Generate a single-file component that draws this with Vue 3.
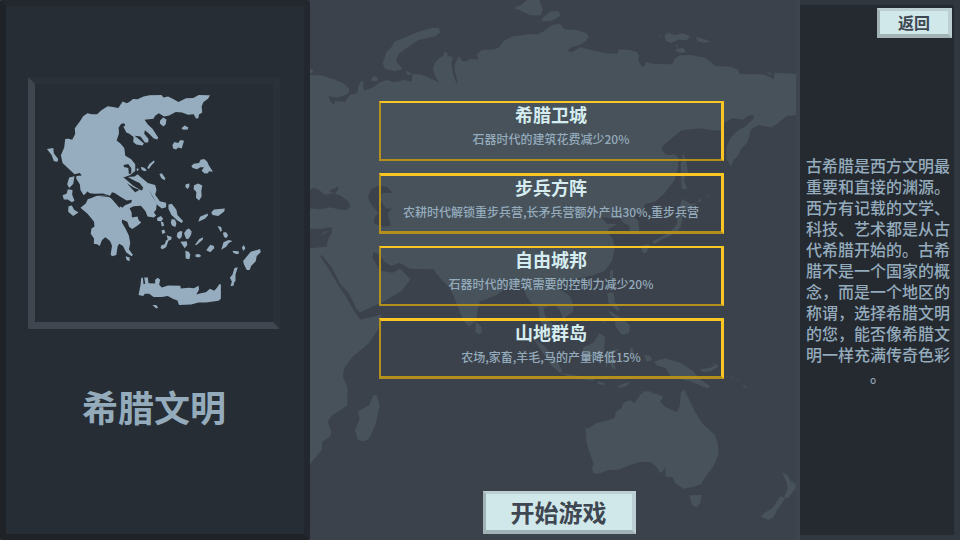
<script setup>
import { ref } from 'vue'

const civName = ref('希腊文明')
const intro = ref('古希腊是西方文明最重要和直接的渊源。西方有记载的文学、科技、艺术都是从古代希腊开始的。古希腊不是一个国家的概念，而是一个地区的称谓，选择希腊文明的您，能否像希腊文明一样充满传奇色彩。')
const perks = ref([
    { name: '希腊卫城', effect: '石器时代的建筑花费减少20%' },
    { name: '步兵方阵', effect: '农耕时代解锁重步兵营,长矛兵营额外产出30%,重步兵营' },
    { name: '自由城邦', effect: '石器时代的建筑需要的控制力减少20%' },
    { name: '山地群岛', effect: '农场,家畜,羊毛,马的产量降低15%' },
])
const emits = defineEmits(['start', 'back'])
</script>

<template>
    <div class="screen">
        <aside class="civ">
            <div class="frame">
                <svg viewBox="105 72 717 717" aria-hidden="true">
                    <!-- mainland -->
                    <path d="M242 182L250 169L263 160L276 163L292 163L305 151L324 139L340 141L356 144L369 125L382 130L392 124L400 117L414 118L432 110L450 106L486 105L492 113L506 110L524 119L537 126L560 115L582 114L598 105L632 106L627 116L612 127L607 140L609 158L599 164L597 175L590 176L583 163L566 165L548 158L529 156L509 167L494 170L478 160L467 168L462 177L435 180L445 194L459 207L476 233L474 239L463 236L448 221L436 211L434 222L447 238L446 248L436 248L423 230L405 228L421 241L433 251L429 257L410 254L401 247L402 232L389 222L380 218L371 200L377 198L374 190L365 192L357 203L358 221L351 242L363 252L374 265L377 288L394 298L407 314L407 334L392 346L374 353L385 360L406 370L431 389L425 393L402 384L382 371L400 391L407 398L432 384L448 390L459 412L472 431L470 450L463 459L470 468L463 474L444 471L438 455L424 439L402 440L390 446L396 459L397 474L414 471L417 482L425 489L413 499L398 509L389 503L383 487L367 480L367 490L378 508L388 529L392 552L388 570L400 587L396 591L380 580L370 560L359 553L354 561L350 587L337 591L333 586L337 559L331 545L317 534L307 542L300 560L292 555L282 553L283 538L273 523L275 507L284 502L283 487L264 464L242 445L258 432L264 419L277 415L295 407L321 409L335 416L353 432L368 445L376 437L395 430L397 421L381 423L361 411L345 400L337 398L331 409L310 402L285 403L270 401L263 396L252 408L242 391L240 374L229 357L230 349L246 348L240 340L224 344L188 310L183 287L193 263L196 238L206 237L217 240L226 223L225 205Z" />
                    <!-- gulfs -->
                    <path class="sea" d="M372 316L386 313L395 326L395 341L388 344L386 325L373 322ZM240 441L228 404L246 408L266 403L284 406L332 411L350 425L366 438L359 445L332 413L287 408L263 415ZM370 352L397 355L431 388L425 393L400 378L382 362Z" />
                    <path d="M385 352L405 351L414 344L425 354L445 370L467 376L471 391L467 406L481 425L500 430L500 443L487 447L472 435L461 413L450 394L435 389L420 370L402 362Z" />
                    <!-- ionian islands -->
                    <path d="M141 268L160 265L162 281L175 298L173 306L162 305L155 286ZM208 354L224 350L220 373L208 385L202 374ZM204 389L218 391L217 406L224 424L216 428L204 420L192 420L188 407L200 403ZM206 440L216 438L223 451L236 459L220 470L205 457Z" />
                    <!-- northern aegean -->
                    <path d="M482 182L491 173L501 179L499 193L492 200L481 191ZM546 205L556 197L567 203L565 209L552 210ZM519 256L525 247L536 250L543 241L554 243L547 266L536 263L530 269L521 266ZM576 319L583 312L599 310L604 300L615 298L624 306L628 316L641 336L629 335L626 341L616 342L607 333L614 323L603 323L593 329L580 325ZM559 374L570 372L570 381L565 388L558 382ZM584 377L597 372L609 378L606 394L607 411L599 423L590 415L591 397L583 389ZM480 343L487 341L498 356L495 362L485 355ZM443 325L449 314L464 302L465 308L456 317L448 328ZM424 321L434 324L442 332L435 335L426 330ZM412 326L418 328L415 334L411 332Z" />
                    <!-- cyclades and dodecanese -->
                    <path d="M507 435L517 433L531 451L534 467L551 485L547 491L535 484L516 467L507 448ZM473 476L484 470L491 477L486 486L473 484ZM484 488L491 488L494 499L487 501ZM517 479L527 481L531 492L528 503L518 499L514 489ZM486 513L494 510L498 519L489 525ZM501 528L517 533L515 541L507 544L500 564L489 570L483 566L486 558L496 555L499 544L505 540ZM543 515L549 516L547 533L540 540L532 532L534 520ZM562 510L569 507L577 516L575 527L567 539L560 538L554 522ZM543 547L562 546L564 557L556 567ZM558 574L568 577L573 586L570 600L559 598ZM589 586L599 584L606 590L598 595L588 592ZM587 556L600 539L612 534L610 541L592 557ZM621 573L633 556L644 560L645 567L633 579ZM597 487L602 472L625 462L626 468L617 478ZM636 459L644 450L677 447L675 456L657 470L640 467ZM655 500L666 503L668 514L664 517ZM671 520L680 518L687 528L681 537L674 532ZM666 571L673 549L688 542L700 545L689 551L681 562ZM700 574L718 576L720 582L714 585L703 581ZM728 565L734 557L739 567L733 575Z" />
                    <path d="M783 569L785 579L773 590L770 606L756 620L752 632L743 632L734 614L732 605L748 586L755 577L774 572ZM706 626L716 624L709 646L709 665L704 672L704 679L694 681L698 667L692 656L700 646ZM378 591L390 595L390 606L381 602Z" />
                    <!-- crete -->
                    <path d="M423 677L425 656L430 656L432 675L437 674L434 655L445 655L447 672L467 673L467 662L475 656L482 662L479 677L487 685L506 679L543 680L544 688L568 686L584 687L598 680L599 692L591 706L607 702L620 699L632 689L645 695L653 686L660 675L665 675L665 719L658 725L620 730L598 730L575 736L539 738L534 724L520 719L505 711L487 714L462 714L449 704L436 704L431 711L417 708ZM459 738L470 738L476 745L470 748Z" />
                </svg>
            </div>
            <h1>{{ civName }}</h1>
        </aside>

        <main class="setup">
            <svg class="world" viewBox="0 0 1458 1620" preserveAspectRatio="xMidYMid slice" aria-hidden="true">
                <!-- europe and asia -->
                <path d="M-5 225L30 226L70 237L100 250L116 264L118 276L108 284L82 293L55 288L62 306L71 315L76 303L105 305L120 284L142 280L145 258L154 242L160 246L160 268L167 271L190 262L211 246L233 240L252 247L285 240L305 245L307 222L330 223L352 230L388 248L374 226L369 206L374 190L388 174L402 166L402 156L411 157L413 167L429 172L424 190L429 220L439 250L443 248L435 215L434 193L447 168L456 184L470 184L480 177L505 178L501 162L516 150L553 148L566 143L580 123L606 110L655 103L684 103L704 92L725 76L750 71L763 88L800 90L830 100L836 111L826 125L803 138L785 140L772 154L785 157L812 141L835 148L888 160L923 161L926 148L960 150L980 156L987 167L984 183L997 200L1005 197L1007 186L1032 192L1087 193L1094 177L1110 166L1142 165L1185 173L1206 189L1215 198L1262 200L1283 209L1289 222L1360 223L1391 238L1395 218L1458 222V345L1430 348L1404 370L1383 382L1345 375L1322 389L1313 425L1292 449L1285 466L1271 480L1263 498L1250 480L1249 440L1262 414L1283 392L1307 378L1331 356L1330 345L1314 347L1300 359L1270 354L1245 367L1235 392L1202 390L1170 385L1115 391L1088 412L1058 438L1055 450L1071 465L1095 463L1105 475L1104 505L1092 543L1062 581L1035 605L1006 611L992 640L965 635L955 643L984 660L988 689L966 706L958 694L958 677L940 668L930 650L915 656L873 651L891 671L923 672L895 688L896 702L908 716L914 742L906 783L884 813L850 826L792 837L756 850L747 866L780 888L791 920L788 935L760 958L749 930L731 910L700 925L707 952L726 970L740 1010L722 1010L700 984L690 958L685 920L671 919L650 890L640 858L602 855L555 888L510 904L502 930L500 960L476 980L458 958L438 905L420 863L390 834L370 808L300 806L268 788L243 798L225 786L207 763L190 756L188 774L210 812L248 818L270 806L302 838L275 873L220 905L151 937L140 927L118 882L90 850L66 803L36 766L30 768L52 801L86 858L108 890L134 936L151 959L215 944L204 990L175 1031L128 1070L102 1105L99 1130L112 1162L112 1216L64 1248L53 1266L64 1296L61 1309L37 1325L35 1350L-5 1398Z" />
                <!-- arctic islands -->
                <path d="M218 190L230 155L242 145L255 124L290 110L320 97L365 84L386 84L391 97L376 109L325 120L290 144L266 161L257 184L278 207L252 213L225 206ZM183 237L192 228L205 234L200 244L186 243ZM288 212L302 218L304 226L290 222ZM0 206L9 211L8 218L0 219ZM610 24L635 14L650 0L688 0L698 28L692 46L660 46L628 30ZM698 54L720 35L746 33L751 48L724 62L694 64ZM1064 106L1077 98L1094 106L1115 100L1140 108L1131 121L1105 119L1083 129L1067 122ZM1158 111L1188 119L1200 124L1185 129L1163 123ZM1098 146L1120 144L1128 156L1112 159L1096 152ZM1369 216L1383 219L1381 225ZM1094 138L1103 136L1102 143ZM1046 109L1052 108L1051 114Z" />
                <!-- sakhalin and japan -->
                <path d="M1119 460L1128 480L1134 515L1121 540L1132 568L1115 567L1112 495ZM1116 596L1140 611L1163 609L1140 623L1127 634L1108 624ZM1110 631L1119 648L1111 684L1092 702L1060 716L1032 733L1028 724L1080 696L1100 674L1103 640ZM998 735L1018 732L1010 758L1000 760L993 747ZM1160 605L1176 594L1171 605ZM1190 590L1198 585L1194 593Z" />
                <!-- madagascar and ceylon -->
                <path d="M190 1185L200 1186L209 1218L197 1272L177 1317L160 1324L144 1320L135 1290L149 1257L144 1235L178 1215ZM498 966L514 980L516 997L507 1003L496 996Z" />
                <!-- south east asia -->
                <path d="M668 1012L700 1035L735 1075L757 1112L750 1120L720 1092ZM751 1119L805 1127L853 1137L850 1142L785 1133ZM820 1042L850 1028L868 1000L885 1010L882 1052L865 1085L832 1080L817 1060ZM897 1052L930 1045L915 1057L904 1069L918 1108L907 1105L895 1082L887 1112L888 1071ZM892 878L911 878L914 906L930 929L923 932L895 908ZM914 963L942 958L960 978L956 999L936 1005L917 980ZM875 975L890 952L889 963ZM895 931L940 958L921 956L903 946ZM961 1042L970 1047L969 1067L960 1060ZM864 1143L884 1150L883 1156L863 1151ZM923 1158L964 1143L948 1158L930 1165ZM1002 1065L1020 1067L1027 1080L1010 1085ZM1032 1085L1065 1075L1112 1089L1150 1114L1165 1134L1199 1158L1195 1165L1172 1157L1142 1144L1082 1130L1068 1105L1040 1096ZM1170 1108L1201 1103L1220 1094L1225 1100L1202 1114L1177 1116ZM1205 1086L1222 1096L1219 1100ZM1241 1123L1255 1130L1251 1132ZM1256 1128L1270 1134L1266 1136ZM1273 1133L1290 1144L1283 1142ZM1298 1152L1314 1166L1302 1161ZM902 809L910 810L907 840L899 833Z" />
                <!-- australia and new zealand -->
                <path d="M827 1282L836 1286L858 1270L891 1262L914 1253L918 1235L935 1223L939 1210L958 1200L974 1210L992 1182L1012 1178L1040 1181L1060 1190L1051 1205L1065 1220L1100 1237L1109 1219L1113 1177L1122 1168L1144 1212L1156 1237L1177 1270L1199 1291L1215 1305L1223 1330L1226 1362L1209 1402L1190 1425L1173 1452L1152 1460L1120 1466L1096 1450L1087 1431L1066 1430L1067 1403L1052 1420L1039 1400L1022 1387L990 1385L952 1398L925 1409L897 1410L865 1421L850 1420L846 1405L851 1391L837 1352L829 1325ZM995 1174L1029 1175L1022 1181L1001 1181ZM1138 1486L1175 1485L1170 1509L1160 1522L1147 1516ZM1416 1417L1434 1428L1440 1441L1457 1453L1455 1467L1434 1495L1422 1490L1433 1468L1430 1448ZM1411 1489L1427 1495L1403 1527L1389 1554L1375 1559L1353 1551L1361 1540L1387 1525Z" />
                <!-- inland seas -->
                <path class="sea" d="M-5 572L11 563L28 571L45 585L70 579L94 588L115 604L121 620L112 630L90 629L62 622L30 628L-5 625ZM56 573L86 559L84 570L75 580ZM174 588L185 566L207 557L232 561L247 578L216 579L211 600L227 624L246 627L234 638L235 653L244 676L220 681L194 671L191 658L205 637L190 622L178 604ZM-5 685L29 687L65 681L66 700L57 710L49 740L-5 745Z" />
                <path d="M32 704L54 691L46 701Z" />
            </svg>
            <ul class="perks">
                <li v-for="perk in perks" :key="perk.name" class="perk">
                    <h2>{{ perk.name }}</h2>
                    <p>{{ perk.effect }}</p>
                </li>
            </ul>
            <button type="button" class="start" @click="emits('start')">开始游戏</button>
        </main>

        <aside class="story">
            <button type="button" class="back" @click="emits('back')">返回</button>
            <p>{{ intro }}</p>
        </aside>
    </div>
</template>

<style>
body {
    margin: 0;
    background: #3c424b;
}
</style>

<style scoped>
.screen {
    display: grid;
    grid-template-columns: 31fr 49fr 16fr;
    min-height: 100vh;
    font-family: "Noto Sans CJK SC", sans-serif;
    font-weight: 500;
    color: #94abbc;
}

.screen * {
    box-sizing: border-box;
}

h1,
h2,
p,
ul {
    margin: 0;
    padding: 0;
}

.civ {
    display: flex;
    flex-direction: column;
    align-items: center;
    padding: 71px 17px 16px 15px;
    border: 6px solid;
    border-color: #23282e #23272f #1f2226 #1f2226;
    border-radius: 3px;
    background: #272d34;
}

.frame {
    width: 100%;
    max-width: 252px;
    border: 7px solid;
    border-color: #2b3138 #2b3138 #40464f #40464f;
    border-radius: 2px;
}

.frame svg {
    display: block;
    width: 100%;
    fill: #96adbf;
}

.frame .sea {
    fill: #272d34;
}

h1 {
    margin-top: 50px;
    font-size: 36px;
    line-height: 54px;
    font-weight: 700;
}

.setup {
    position: relative;
    display: flex;
    flex-direction: column;
    border-right: 4px solid #3e454f;
    background: #3c424b;
}

.world {
    position: absolute;
    inset: 0;
    width: 100%;
    height: 100%;
    fill: #48525b;
}

.world .sea {
    fill: #3c424b;
}

.perks {
    position: relative;
    display: flex;
    flex-direction: column;
    gap: 12px;
    margin: 101px 72px 24px 69px;
    list-style: none;
}

.perk {
    min-height: 60px;
    border: 2px solid;
    border-right-width: 3px;
    border-color: #f9c623 #f9c623 #b38f1e #b38f1e;
    text-align: center;
}

.perk:nth-child(even) {
    min-height: 61px;
    border-top-width: 3px;
    border-bottom-width: 3px;
}

.perk h2 {
    font-size: 18px;
    line-height: 22px;
    font-weight: 700;
    color: #d5edf0;
}

.perk p {
    font-size: 12px;
    line-height: 28px;
    color: #94abbc;
}

button {
    border: 3px solid;
    border-color: #bccfd2 #bccfd2 #a1b3b5 #a1b3b5;
    background: #d1e8ea;
    color: #3e4751;
    font-family: inherit;
    font-weight: 700;
    cursor: pointer;
}

.start {
    position: relative;
    align-self: center;
    margin: auto 0 6px 12px;
    padding: 0 25px;
    border-width: 3px 4px 4px 3px;
    font-size: 24px;
    line-height: 36px;
}

.story {
    display: grid;
    grid-template-rows: 1fr auto 1fr;
    border: 5px solid #31373f;
    border-left-width: 0;
    border-right-width: 6px;
    background: #252930;
}

.back {
    align-self: start;
    justify-self: end;
    margin: 3px 2px 0 0;
    padding: 0 18px;
    border-right-width: 4px;
    border-bottom-width: 4px;
    font-size: 16px;
    line-height: 23px;
}

.story p {
    padding: 0 4px 0 6px;
    font-size: 16px;
    line-height: 21px;
    text-align: center;
    line-break: anywhere;
    text-spacing-trim: space-all;
    color: #94abbc;
}
</style>
